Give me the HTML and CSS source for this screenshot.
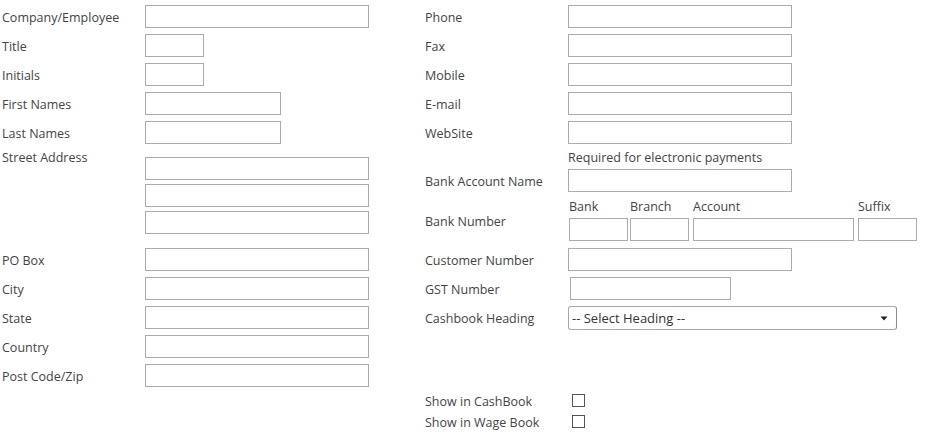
FILE: index.html
```html
<!DOCTYPE html>
<html lang="en">
<head>
<meta charset="utf-8">
<title>Contact Details</title>
<link rel="stylesheet" href="styles.css">
</head>
<body>
<div class="form">
  <div class="col col-left">
    <div class="row"><label class="lbl">Company/Employee</label><input class="in w224" type="text"></div>
    <div class="row"><label class="lbl">Title</label><input class="in w59" type="text"></div>
    <div class="row"><label class="lbl">Initials</label><input class="in w59" type="text"></div>
    <div class="row"><label class="lbl">First Names</label><input class="in w136" type="text"></div>
    <div class="row"><label class="lbl">Last Names</label><input class="in w136" type="text"></div>
    <div class="row address">
      <label class="lbl lbl-top">Street Address</label>
      <div class="stack">
        <input class="in w224" type="text">
        <input class="in w224" type="text">
        <input class="in w224" type="text">
      </div>
    </div>
    <div class="row"><label class="lbl">PO Box</label><input class="in w224" type="text"></div>
    <div class="row"><label class="lbl">City</label><input class="in w224" type="text"></div>
    <div class="row"><label class="lbl">State</label><input class="in w224" type="text"></div>
    <div class="row"><label class="lbl">Country</label><input class="in w224" type="text"></div>
    <div class="row"><label class="lbl">Post Code/Zip</label><input class="in w224" type="text"></div>
  </div>
  <div class="col col-right">
    <div class="row"><label class="lbl">Phone</label><input class="in w224" type="text"></div>
    <div class="row"><label class="lbl">Fax</label><input class="in w224" type="text"></div>
    <div class="row"><label class="lbl">Mobile</label><input class="in w224" type="text"></div>
    <div class="row"><label class="lbl">E-mail</label><input class="in w224" type="text"></div>
    <div class="row"><label class="lbl">WebSite</label><input class="in w224" type="text"></div>
    <div class="note">Required for electronic payments</div>
    <div class="row"><label class="lbl">Bank Account Name</label><input class="in w224" type="text"></div>
    <div class="row bankrow">
      <label class="lbl">Bank Number</label>
      <div class="bankgrid">
        <span class="sub">Bank</span>
        <span class="sub">Branch</span>
        <span class="sub">Account</span>
        <span class="sub">Suffix</span>
        <input class="in w59" type="text">
        <input class="in w59" type="text">
        <input class="in w161" type="text">
        <input class="in w59" type="text">
      </div>
    </div>
    <div class="row"><label class="lbl">Customer Number</label><input class="in w224" type="text"></div>
    <div class="row"><label class="lbl">GST Number</label><input class="in w161 off2" type="text"></div>
    <div class="row"><label class="lbl">Cashbook Heading</label>
      <div class="select">
        <span class="select-text">-- Select Heading --</span>
        <span class="select-btn"><svg width="8" height="5" viewBox="0 0 8 5"><path d="M0.5 0.5h7L4 4.5z" fill="#222"/></svg></span>
      </div>
    </div>
    <div class="row chk first"><label class="lbl">Show in CashBook</label><input class="cb" type="checkbox"></div>
    <div class="row chk"><label class="lbl">Show in Wage Book</label><input class="cb" type="checkbox"></div>
  </div>
</div>
</body>
</html>
```
FILE: styles.css
```css
html, body {
  margin: 0;
  padding: 0;
  background: #fff;
}
body {
  font-family: "Open Sans", "Noto Sans", "Liberation Sans", sans-serif;
  font-size: 12.5px;
  line-height: 17px;
  color: #444;
}
.form {
  display: flex;
  padding: 2px 0 0 2px;
}
.col-left {
  width: 423px;
  flex: none;
}
.col-right {
  flex: none;
}
.row {
  display: flex;
  align-items: center;
  height: 29px;
}
.lbl {
  width: 143px;
  flex: none;
  white-space: nowrap;
  padding-top: 2px;
}
.in {
  box-sizing: border-box;
  height: 23px;
  margin: 0;
  padding: 0 4px;
  border: 1px solid #ababab;
  border-radius: 0;
  background: #fff;
  font: inherit;
  outline: none;
}
.w224 { width: 224px; }
.w136 { width: 136px; }
.w161 { width: 161px; }
.w59 { width: 59px; }
.off2 { margin-left: 2px; }

.address {
  height: 98px;
  align-items: flex-start;
}
.lbl-top {
  padding-top: 2px;
}
.stack {
  display: flex;
  flex-direction: column;
  gap: 4px;
  padding-top: 10px;
}

.note {
  height: 17px;
  padding-top: 2px;
  margin-left: 143px;
  white-space: nowrap;
}

.bankrow {
  height: 50px;
}
.bankgrid {
  display: grid;
  grid-template-columns: 59px 61px 163px 59px;
  grid-template-rows: 17px 23px;
  column-gap: 2px;
  row-gap: 3px;
  margin-left: 1px;
  align-self: flex-start;
  padding-top: 3px;
  justify-items: start;
}
.sub {
  white-space: nowrap;
}

.select {
  box-sizing: border-box;
  width: 329px;
  height: 24px;
  border: 1px solid #a9a9a9;
  border-right-color: #8a8a8a;
  border-radius: 3px;
  background: #fff;
  display: flex;
  align-items: center;
  color: #333;
  font-size: 13px;
}
.select-text {
  padding: 2px 0 0 3px;
  flex: 1;
}
.select-btn {
  width: 20px;
  display: flex;
  justify-content: center;
  align-items: center;
  padding: 1px 2px 0 0;
}
.select-btn svg {
  display: block;
}

.chk {
  height: 21px;
}
.chk.first {
  margin-top: 58px;
}
.cb {
  appearance: none;
  -webkit-appearance: none;
  box-sizing: border-box;
  width: 13px;
  height: 13px;
  margin: 0 0 0 4px;
  border: 1px solid #555;
  border-radius: 0;
  background: #fff;
}
```
